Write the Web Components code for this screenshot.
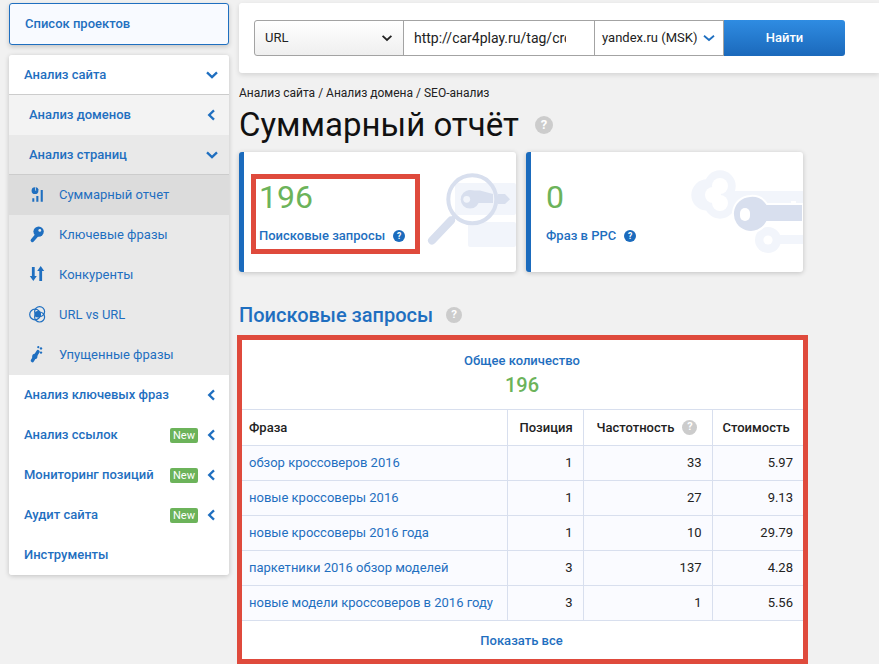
<!DOCTYPE html>
<html lang="ru">
<head>
<meta charset="utf-8">
<title>Суммарный отчёт</title>
<style>
    html, body { margin: 0; height: 100%; }
    body {
        background: #f1f1f1;
        color: #222;
        font-family: Roboto, "Noto Sans", sans-serif;
        overflow: hidden;
    }
</style>
</head>
<body>
<seo-app>
    <seo-sidebar slot="side"></seo-sidebar>
    <seo-search slot="main"></seo-search>
    <seo-heading slot="main"></seo-heading>
    <seo-cards slot="main">
        <seo-card value="196" label="Поисковые запросы" art="search" marked></seo-card>
        <seo-card value="0" label="Фраз в РРС" art="keys"></seo-card>
    </seo-cards>
    <seo-section slot="main" title="Поисковые запросы"></seo-section>
    <seo-table slot="main"></seo-table>
</seo-app>

<script>
const BLUE = '#1f6fc0';

const ICONS = {
    summary: `<circle cx="6" cy="4.7" r="3.4"/><path d="M6 4.7l3.4-1.4v-2H6z" fill="#dcdcdc"/><path d="M6.8 3.9V1.2a3.2 3.2 0 0 1 2.8 2.7z"/><path d="M3.3 12.3h2v3.4h-2zM7.3 10h2.1v5.7H7.3zM11.7 4h2.1v11.7h-2.1z"/>`,
    key: `<path d="M3.4 14.4l4.6-5.4" stroke="${BLUE}" stroke-width="3.6" stroke-linecap="round"/><circle cx="9.6" cy="5.6" r="5.2"/><circle cx="10.8" cy="4.4" r="1.4" fill="#e9e9e9"/>`,
    arrows: `<path d="M4.3 1v10M11.7 15V5" stroke="${BLUE}" stroke-width="2.8" fill="none"/><path d="M.8 10h7L4.3 15zM8.2 5h7L11.7 0z"/>`,
    compare: `<g fill="none" stroke="${BLUE}" stroke-width="1.2"><circle cx="6" cy="8.5" r="5.3"/><circle cx="10.6" cy="5.6" r="5"/><circle cx="10.6" cy="11" r="5"/></g><circle cx="8.8" cy="8.3" r="3.2"/>`,
    missed: `<path d="M3.4 14.6l5.6-9" stroke="${BLUE}" stroke-width="3.4" stroke-linecap="round"/><circle cx="5.8" cy="10.4" r="2.6"/><circle cx="12" cy="2.4" r="1.2"/><circle cx="12" cy="6.6" r="1.2"/><circle cx="9.3" cy="1.2" r="1.1"/>`
};

class SeoApp extends HTMLElement {
    constructor() {
        super();
        this.attachShadow({ mode: 'open' });
        this.shadowRoot.innerHTML = `
            <style>
                :host {
                    display: grid;
                    grid-template-columns: 220px 640px;
                    column-gap: 10px;
                    padding: 3px 0 0 9px;
                }
                .main { display: flex; flex-direction: column; }
            </style>
            <div><slot name="side"></slot></div>
            <div class="main"><slot name="main"></slot></div>
        `;
    }
}

class SeoHelp extends HTMLElement {
    constructor() {
        super();
        this.attachShadow({ mode: 'open' });
        this.shadowRoot.innerHTML = `
            <style>
                :host {
                    display: inline-flex;
                    align-items: center;
                    justify-content: center;
                    flex: none;
                    width: var(--help-size, 16px);
                    height: var(--help-size, 16px);
                    border-radius: 50%;
                    background: var(--help-color, #cccccc);
                    color: #fff;
                    font: 700 calc(var(--help-size, 16px) * .72)/1 Roboto, sans-serif;
                }
            </style>
            ?
        `;
    }
}

class SeoNavItem extends HTMLElement {
    connectedCallback() {
        if (this.shadowRoot) {
            return;
        }
        const icon = this.getAttribute('icon');
        const badge = this.hasAttribute('badge');
        const chevron = this.getAttribute('chevron');
        this.attachShadow({ mode: 'open' });
        this.shadowRoot.innerHTML = `
            <style>
                :host {
                    display: flex;
                    align-items: center;
                    box-sizing: border-box;
                    height: 40px;
                    padding-left: 15px;
                    background: #fff;
                    color: ${BLUE};
                    font: 500 13px/16px Roboto, sans-serif;
                }
                :host([level="1"]) { padding-left: 20px; background: #f3f3f3; }
                :host([level="1"][open]) { background: #e9e9e9; }
                :host([level="2"]) { padding-left: 20px; background: #e9e9e9; font-weight: 400; }
                :host([active]) { background: #dcdcdc; }
                :host([ruled]) { border-bottom: 1px solid #cccccc; }
                .icon { width: 18px; height: 18px; margin-right: 12px; fill: ${BLUE}; flex: none; }
                .label { flex: 1; white-space: nowrap; }
                .badge {
                    box-sizing: border-box;
                    width: 28px;
                    height: 15px;
                    text-align: center;
                    background: #6cb35a;
                    color: #fff;
                    font-size: 11px;
                    font-weight: 400;
                    line-height: 15px;
                    border-radius: 2px;
                    margin-right: 8px;
                }
                .chev { width: 12px; height: 12px; margin-right: 11px; flex: none; fill: none; stroke: ${BLUE}; stroke-width: 2.3; }
            </style>
            ${icon ? `<svg class="icon" viewBox="0 0 18 18">${ICONS[icon]}</svg>` : ''}
            <span class="label">${this.getAttribute('label')}</span>
            ${badge ? '<span class="badge">New</span>' : ''}
            ${chevron === 'down' ? '<svg class="chev" viewBox="0 0 12 12"><path d="M1 3.4L6 8.2l5-4.8"/></svg>' : ''}
            ${chevron === 'left' ? '<svg class="chev" viewBox="0 0 12 12"><path d="M8 1.4L3.2 6 8 10.6"/></svg>' : ''}
        `;
    }
}

class SeoSidebar extends HTMLElement {
    constructor() {
        super();
        this.attachShadow({ mode: 'open' });
        this.shadowRoot.innerHTML = `
            <style>
                :host { display: block; }
                .projects {
                    box-sizing: border-box;
                    height: 42px;
                    margin-bottom: 10px;
                    padding-left: 15px;
                    display: flex;
                    align-items: center;
                    background: #f8faff;
                    border: 1px solid ${BLUE};
                    border-radius: 3px;
                    box-shadow: 0 2px 5px rgba(0,0,0,.18);
                    color: ${BLUE};
                    font: 500 13px/16px Roboto, sans-serif;
                }
                .menu {
                    border-radius: 3px;
                    overflow: hidden;
                    box-shadow: 0 1px 5px rgba(0,0,0,.2);
                }
            </style>
            <div class="projects">Список проектов</div>
            <div class="menu">
                <seo-nav-item label="Анализ сайта" chevron="down" ruled></seo-nav-item>
                <seo-nav-item level="1" label="Анализ доменов" chevron="left"></seo-nav-item>
                <seo-nav-item level="1" open label="Анализ страниц" chevron="down" ruled></seo-nav-item>
                <seo-nav-item level="2" active icon="summary" label="Суммарный отчет"></seo-nav-item>
                <seo-nav-item level="2" icon="key" label="Ключевые фразы"></seo-nav-item>
                <seo-nav-item level="2" icon="arrows" label="Конкуренты"></seo-nav-item>
                <seo-nav-item level="2" icon="compare" label="URL vs URL"></seo-nav-item>
                <seo-nav-item level="2" icon="missed" label="Упущенные фразы"></seo-nav-item>
                <seo-nav-item label="Анализ ключевых фраз" chevron="left"></seo-nav-item>
                <seo-nav-item label="Анализ ссылок" badge chevron="left"></seo-nav-item>
                <seo-nav-item label="Мониторинг позиций" badge chevron="left"></seo-nav-item>
                <seo-nav-item label="Аудит сайта" badge chevron="left"></seo-nav-item>
                <seo-nav-item label="Инструменты"></seo-nav-item>
            </div>
        `;
    }
}

class SeoSearch extends HTMLElement {
    constructor() {
        super();
        this.attachShadow({ mode: 'open' });
        this.shadowRoot.innerHTML = `
            <style>
                :host {
                    display: flex;
                    box-sizing: border-box;
                    height: 70px;
                    padding: 17px 15px;
                    background: #fff;
                    border-radius: 3px 0 0 3px;
                    box-shadow: 0 2px 5px rgba(0,0,0,.12);
                    font: 400 13px/34px Roboto, sans-serif;
                    color: #222;
                }
                .field {
                    box-sizing: border-box;
                    height: 36px;
                    border: 1px solid #a3a3a3;
                    display: flex;
                    align-items: center;
                    white-space: nowrap;
                }
                .type {
                    width: 150px;
                    padding: 0 10px;
                    justify-content: space-between;
                    border-radius: 3px 0 0 3px;
                    background: linear-gradient(#ffffff, #efefef);
                }
                .url { width: 192px; margin-left: -1px; padding: 0 0 0 10px; font-size: 14px; }
                .url span { display: block; width: 152px; overflow: hidden; }
                .engine { width: 130px; margin-left: -1px; padding: 0 8px 0 7px; justify-content: space-between; }
                svg { width: 12px; height: 12px; flex: none; fill: none; stroke-width: 1.8; }
                button {
                    all: unset;
                    box-sizing: border-box;
                    width: 121px;
                    height: 36px;
                    text-align: center;
                    color: #fff;
                    font: 500 13px/34px Roboto, sans-serif;
                    background: linear-gradient(#2f8ce2, #1b69bb);
                    border-radius: 0 3px 3px 0;
                }
            </style>
            <div class="field type">URL<svg viewBox="0 0 12 12" stroke="#222"><path d="M1.6 3.8L6 8l4.4-4.2"/></svg></div>
            <div class="field url"><span>http://car4play.ru/tag/cro</span></div>
            <div class="field engine">yandex.ru (MSK)<svg viewBox="0 0 12 12" stroke="${BLUE}"><path d="M1 3.8L6 8l5-4.2"/></svg></div>
            <button>Найти</button>
        `;
    }
}

class SeoHeading extends HTMLElement {
    constructor() {
        super();
        this.attachShadow({ mode: 'open' });
        this.shadowRoot.innerHTML = `
            <style>
                :host { display: block; padding-top: 12px; }
                .crumbs { font: 400 12px/16px Roboto, sans-serif; color: #222; }
                .title {
                    display: flex;
                    align-items: center;
                    height: 44px;
                    margin: 2px 0 5px;
                    gap: 16px;
                    font: 400 33px/44px Roboto, sans-serif;
                    color: #111;
                    --help-size: 18px;
                }
            </style>
            <div class="crumbs">Анализ сайта / Анализ домена / SEO-анализ</div>
            <div class="title">Суммарный отчёт <seo-help></seo-help></div>
        `;
    }
}

class SeoCards extends HTMLElement {
    constructor() {
        super();
        this.attachShadow({ mode: 'open' });
        this.shadowRoot.innerHTML = `
            <style>
                :host { display: flex; gap: 10px; }
            </style>
            <slot></slot>
        `;
    }
}

const CARD_ART = {
    search: `
        <rect x="216" y="31" width="61" height="32" rx="2" fill="#f2f5fb"/>
        <rect x="229" y="70" width="48" height="25" rx="2" fill="#f2f5fb"/>
        <path d="M193 88.5l19-20" stroke="#d8dfee" stroke-width="8" stroke-linecap="round"/>
        <path d="M212 68l5-5" stroke="#d8dfee" stroke-width="4"/>
        <path d="M229 38.5h12l13 3.5v9h-24z" fill="#d8dfee"/>
        <circle cx="231" cy="47.3" r="9.3" fill="#d8dfee"/>
        <circle cx="227.7" cy="47.3" r="3.4" fill="#f2f5fb"/>
        <path d="M259 42h7l5 5.3-5 4.7h-7z" fill="#d8dfee"/>
        <circle cx="233.3" cy="47.3" r="24" fill="none" stroke="#d8dfee" stroke-width="4"/>`,
    keys: `
        <g fill="#f2f5fb">
            <circle cx="194" cy="34" r="15.7"/><circle cx="181" cy="43" r="15.7"/><circle cx="194" cy="51" r="15.7"/>
            <rect x="205" y="39" width="72" height="16"/>
            <circle cx="242" cy="88" r="13"/>
            <rect x="245" y="83" width="32" height="9"/>
        </g>
        <g fill="#fff">
            <circle cx="194" cy="34" r="8"/><circle cx="187" cy="43" r="8"/><circle cx="194" cy="51" r="8"/>
            <circle cx="242" cy="88" r="4.6"/>
            <rect x="265" y="49" width="5" height="7"/>
        </g>
        <path d="M224 44a18 18 0 0 1 17 8h36v18h-36a18 18 0 1 1-17-26z" fill="#d8dfee" stroke="#fff" stroke-width="2"/>
        <rect x="214" y="56" width="10" height="13" rx="5" fill="#fff"/>`
};

class SeoCard extends HTMLElement {
    constructor() {
        super();
        this.attachShadow({ mode: 'open' });
    }

    connectedCallback() {
        this.shadowRoot.innerHTML = `
            <style>
                :host {
                    position: relative;
                    display: block;
                    box-sizing: border-box;
                    width: 277px;
                    height: 120px;
                    background: #fff;
                    border-left: 5px solid #1b6bbd;
                    border-radius: 3px;
                    box-shadow: 0 1px 5px rgba(0,0,0,.2);
                    overflow: hidden;
                }
                svg { position: absolute; left: -5px; top: 0; width: 277px; height: 120px; }
                .box {
                    position: relative;
                    box-sizing: border-box;
                    width: 159px;
                    height: 70px;
                    margin: 27px 0 0 12px;
                    padding-left: 3px;
                }
                :host([marked]) .box { outline: 5px solid #df4a3c; }
                .value {
                    height: 36px;
                    font: 400 32px/36px Roboto, sans-serif;
                    color: #6cb35a;
                }
                .label {
                    display: flex;
                    align-items: center;
                    gap: 8px;
                    margin-top: 12px;
                    height: 18px;
                    color: ${BLUE};
                    font: 500 13px/18px Roboto, sans-serif;
                    --help-size: 12px;
                    --help-color: #1b6bbd;
                }
            </style>
            <svg viewBox="0 0 277 120">${CARD_ART[this.getAttribute('art')]}</svg>
            <div class="box">
                <div class="value">${this.getAttribute('value')}</div>
                <div class="label">${this.getAttribute('label')} <seo-help></seo-help></div>
            </div>
        `;
    }
}

class SeoSection extends HTMLElement {
    constructor() {
        super();
        this.attachShadow({ mode: 'open' });
    }

    connectedCallback() {
        this.shadowRoot.innerHTML = `
            <style>
                :host {
                    display: flex;
                    align-items: center;
                    gap: 13px;
                    height: 28px;
                    margin: 29px 0 0;
                    padding-bottom: 6px;
                    color: ${BLUE};
                    font: 500 20px/28px Roboto, sans-serif;
                    --help-size: 16px;
                }
            </style>
            ${this.getAttribute('title')} <seo-help></seo-help>
        `;
    }
}

const ROWS = [
    ['обзор кроссоверов 2016', 1, 33, '5.97'],
    ['новые кроссоверы 2016', 1, 27, '9.13'],
    ['новые кроссоверы 2016 года', 1, 10, '29.79'],
    ['паркетники 2016 обзор моделей', 3, 137, '4.28'],
    ['новые модели кроссоверов в 2016 году', 3, 1, '5.56']
];

class SeoTable extends HTMLElement {
    constructor() {
        super();
        this.attachShadow({ mode: 'open' });
        const rows = ROWS.map(r => `
            <tr>
                <td class="phrase">${r[0]}</td>
                <td>${r[1]}</td>
                <td>${r[2]}</td>
                <td>${r[3]}</td>
            </tr>`).join('');
        this.shadowRoot.innerHTML = `
            <style>
                :host {
                    display: block;
                    box-sizing: border-box;
                    width: 571px;
                    height: 329px;
                    margin-left: -2px;
                    background: #fff;
                    border: 5px solid #df4a3c;
                    font: 400 13px/16px Roboto, sans-serif;
                    color: #222;
                }
                .total { height: 69px; box-sizing: border-box; padding: 13px 1px 0 0; text-align: center; }
                .total div { color: ${BLUE}; font-weight: 500; }
                .total b { display: block; margin-top: 2px; font: 500 20px/28px Roboto, sans-serif; color: #6cb35a; }
                table { width: 561px; table-layout: fixed; border-collapse: collapse; }
                th, td { border: 1px solid #d8dfee; height: 35px; padding: 0 10px; box-sizing: border-box; white-space: nowrap; }
                tr > :first-child { border-left: 0; padding-left: 7px; }
                tr > :last-child { border-right: 0; }
                th { height: 36px; text-align: left; font-weight: 500; color: #222; }
                td { background: #fafbff; text-align: right; }
                td.phrase { text-align: left; color: ${BLUE}; }
                th .with-help { display: flex; align-items: center; gap: 8px; --help-size: 15px; }
                .more { height: 38px; padding-right: 2px; text-align: center; line-height: 40px; color: ${BLUE}; font-weight: 500; }
            </style>
            <div class="total">
                <div>Общее количество</div>
                <b>196</b>
            </div>
            <table>
                <colgroup><col style="width:265px"><col style="width:76px"><col style="width:129px"><col></colgroup>
                <thead>
                    <tr>
                        <th>Фраза</th>
                        <th style="padding-left:12px">Позиция</th>
                        <th style="padding-left:13px"><span class="with-help">Частотность <seo-help></seo-help></span></th>
                        <th>Стоимость</th>
                    </tr>
                </thead>
                <tbody>${rows}</tbody>
            </table>
            <div class="more">Показать все</div>
        `;
    }
}

customElements.define('seo-help', SeoHelp);
customElements.define('seo-nav-item', SeoNavItem);
customElements.define('seo-sidebar', SeoSidebar);
customElements.define('seo-search', SeoSearch);
customElements.define('seo-heading', SeoHeading);
customElements.define('seo-cards', SeoCards);
customElements.define('seo-card', SeoCard);
customElements.define('seo-section', SeoSection);
customElements.define('seo-table', SeoTable);
customElements.define('seo-app', SeoApp);
</script>
</body>
</html>
